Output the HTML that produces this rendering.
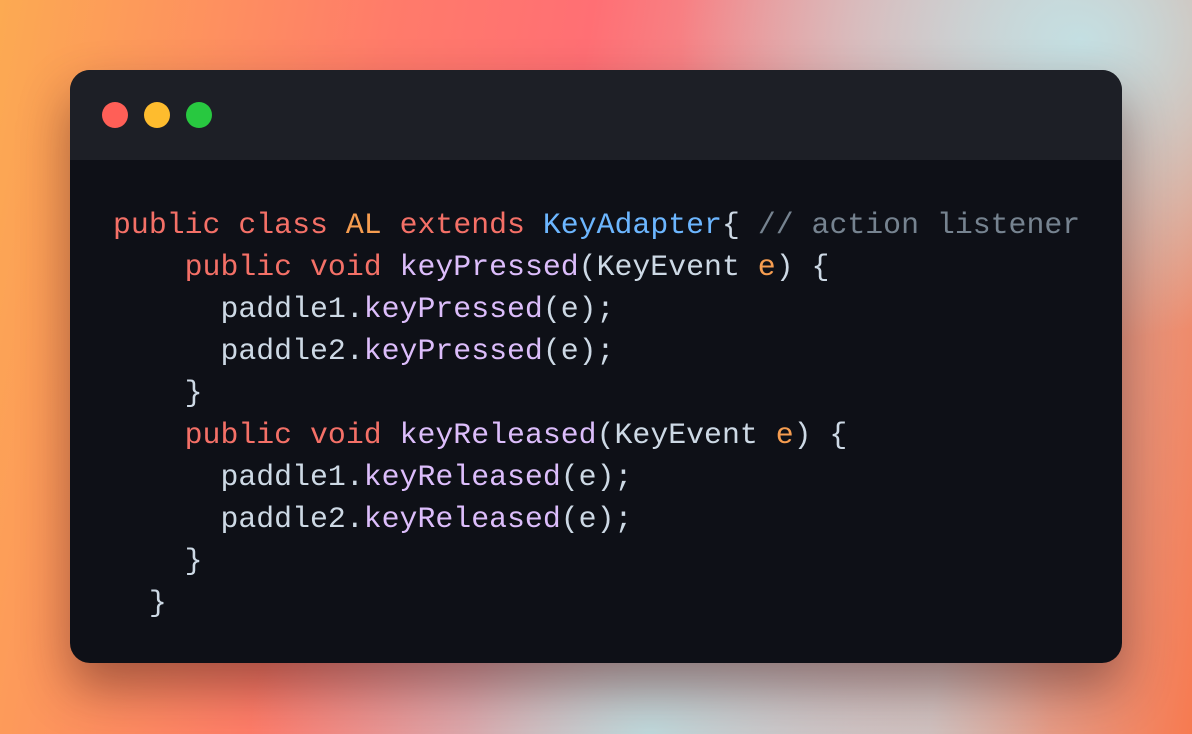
<!DOCTYPE html>
<html><head><meta charset="utf-8"><style>
html,body{margin:0;padding:0;width:1192px;height:734px;overflow:hidden}
body{position:relative;background:
radial-gradient(ellipse 400px 300px at 1080px 40px,#c4dfe2 0%,rgba(196,223,226,0) 100%),
radial-gradient(ellipse 400px 300px at 650px 734px,#bfd9dc 0%,rgba(191,217,220,0) 100%),
linear-gradient(100deg,#fcaa52 0%,#ff7b6a 30%,#ff6f74 45%,#e9a0a0 65%,#d8b8b4 80%,#f77a50 100%);}
.win{position:absolute;left:70px;top:70px;width:1052px;height:593px;border-radius:20px;background:#0e1017;overflow:hidden;box-shadow:0 25px 50px rgba(60,20,20,.45)}
.bar{height:90px;background:#1d1f26;position:relative}
.d{position:absolute;top:32px;width:26px;height:26px;border-radius:50%}
pre{margin:0;position:absolute;left:43px;top:134px;font-family:"Liberation Mono",monospace;font-size:29.85px;line-height:42px;color:#cdd9e5}
.k{color:#f47067}.o{color:#f69d50}.b{color:#6cb6ff}.p{color:#dcbdfb}.c{color:#768390}
</style></head><body>
<div class="win"><div class="bar">
<div class="d" style="left:32px;background:#ff5f57"></div>
<div class="d" style="left:74px;background:#febc2e"></div>
<div class="d" style="left:116px;background:#28c840"></div>
</div>
<pre><span class="k">public class</span> <span class="o">AL</span> <span class="k">extends</span> <span class="b">KeyAdapter</span>{ <span class="c">// action listener</span>
    <span class="k">public void</span> <span class="p">keyPressed</span>(KeyEvent <span class="o">e</span>) {
      paddle1.<span class="p">keyPressed</span>(e);
      paddle2.<span class="p">keyPressed</span>(e);
    }
    <span class="k">public void</span> <span class="p">keyReleased</span>(KeyEvent <span class="o">e</span>) {
      paddle1.<span class="p">keyReleased</span>(e);
      paddle2.<span class="p">keyReleased</span>(e);
    }
  }</pre>
</div>
</body></html>
